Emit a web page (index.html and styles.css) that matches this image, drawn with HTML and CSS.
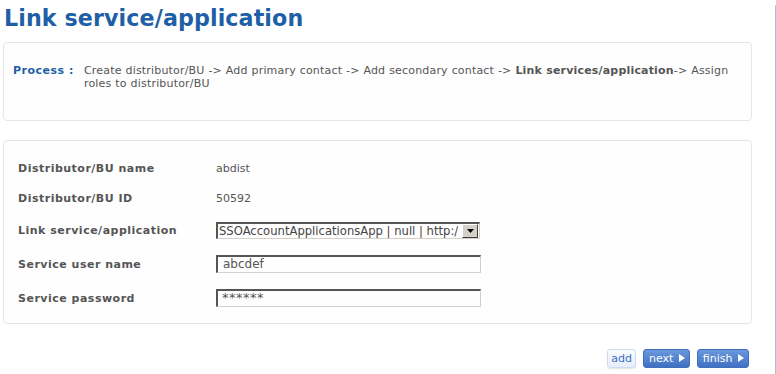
FILE: index.html
```html
<!DOCTYPE html>
<html lang="en">
<head>
    <meta charset="UTF-8">
    <title>Link service/application</title>
    <link rel="stylesheet" href="styles.css">
</head>
<body>
<div class="page">
    <h1>Link service/application</h1>

    <div class="box process-box">
        <div class="process-label">Process :</div>
        <div class="process-steps">Create distributor/BU -&gt; Add primary contact -&gt; Add secondary contact -&gt; <b>Link services/application</b>-&gt; Assign roles to distributor/BU</div>
    </div>

    <div class="box form-box">
        <div class="row text-row">
            <div class="label">Distributor/BU name</div>
            <div class="value">abdist</div>
        </div>
        <div class="row text-row">
            <div class="label">Distributor/BU ID</div>
            <div class="value">50592</div>
        </div>
        <div class="row field-row">
            <div class="label">Link service/application</div>
            <div class="select">
                <span class="select-text">SSOAccountApplicationsApp | null | http:/</span>
                <span class="select-btn">
                    <svg width="7" height="4" viewBox="0 0 7 4"><path d="M0 0h7L3.5 4z" fill="#000"/></svg>
                </span>
            </div>
        </div>
        <div class="row field-row">
            <div class="label">Service user name</div>
            <div class="input">abcdef</div>
        </div>
        <div class="row field-row">
            <div class="label">Service password</div>
            <div class="input stars">******</div>
        </div>
    </div>

    <div class="actions">
        <button class="btn btn-light">add</button>
        <button class="btn btn-blue">next <span class="arrow"></span></button>
        <button class="btn btn-blue">finish <span class="arrow"></span></button>
    </div>
</div>
</body>
</html>
```

FILE: styles.css
```css
* {
    margin: 0;
    padding: 0;
    box-sizing: border-box;
}

body {
    font-family: 'DejaVu Sans', Verdana, sans-serif;
    font-size: 11px;
    color: #555;
    background: #fff;
}

.page {
    width: 776px;
    height: 374px;
    padding: 0 23px 0 3px;
    border-right: 1px solid #aebfd3;
}

h1 {
    color: #1f5fa6;
    font-size: 22.2px;
    font-weight: bold;
    line-height: 26px;
    letter-spacing: 0.1px;
    margin: 5px 0 11px 1px;
}

.box {
    border: 1px solid #e6e6e6;
    border-radius: 4px;
    background: #fefefe;
}

.process-box {
    display: flex;
    height: 79px;
    padding: 21px 10px 0 9px;
    line-height: 13px;
}

.process-label {
    flex: 0 0 71px;
    color: #1f5fa6;
    font-weight: bold;
    letter-spacing: 0.5px;
}

.process-steps {
    letter-spacing: 0.18px;
    word-spacing: 0.2px;
}

.process-steps b {
    color: #555;
}

.form-box {
    margin-top: 19px;
    padding: 12px 0 8px 14px;
}

.row {
    display: flex;
    align-items: center;
}

.text-row {
    height: 30px;
}

.field-row {
    height: 34px;
}

.label {
    flex: 0 0 198px;
    font-weight: bold;
    letter-spacing: 0.5px;
}

.select {
    width: 264px;
    height: 17px;
    display: flex;
    align-items: center;
    justify-content: space-between;
    border-top: 2px solid #555;
    border-left: 2px solid #555;
    border-right: 1px solid #d4d0c8;
    border-bottom: 1px solid #d4d0c8;
    font-size: 11.6px;
    color: #444;
    padding-left: 1px;
    overflow: hidden;
}

.select-text {
    white-space: nowrap;
    overflow: hidden;
}

.select-btn {
    flex: 0 0 16px;
    height: 14px;
    margin-right: 1px;
    display: flex;
    align-items: center;
    justify-content: center;
    background: #d4d0c8;
    border: 1px solid;
    border-color: #fff #404040 #404040 #fff;
}

.input {
    width: 265px;
    height: 18px;
    border-top: 2px solid #555;
    border-left: 2px solid #555;
    border-right: 1px solid #d4d0c8;
    border-bottom: 1px solid #d4d0c8;
    padding-left: 5px;
    font-size: 12px;
    line-height: 14px;
    color: #555;
}

.stars {
    padding-left: 4px;
    font-size: 13px;
    letter-spacing: 0.5px;
}

.actions {
    display: flex;
    justify-content: flex-end;
    gap: 7px;
    margin-top: 25px;
    padding-right: 3px;
}

.btn {
    font-family: 'DejaVu Sans', Verdana, sans-serif;
    font-size: 11px;
    height: 19px;
    line-height: 17px;
    border-radius: 3px;
}

.btn-light {
    color: #3a6fc4;
    background: linear-gradient(#fafcff, #e6eefa);
    border: 1px solid #cfdcef;
    box-shadow: 0 1px 1px rgba(0,0,0,0.1);
    padding: 0 3px;
}

.btn-blue {
    color: #fff;
    background: linear-gradient(#6b98dc, #3f70c2);
    border: 1px solid #3f6fbd;
    padding: 0 4px 0 5px;
}

.arrow {
    display: inline-block;
    width: 0;
    height: 0;
    margin-left: 2px;
    border-left: 6px solid #fff;
    border-top: 4px solid transparent;
    border-bottom: 4px solid transparent;
}
```
